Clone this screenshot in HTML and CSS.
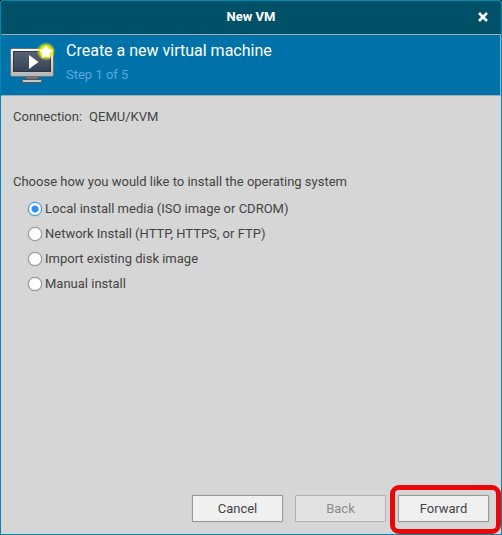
FILE: index.html
```html
<!DOCTYPE html>
<html lang="en">
<head>
<meta charset="utf-8">
<title>New VM</title>
<link rel="stylesheet" href="styles.css">
</head>
<body>
<main class="window">
  <header class="titlebar">
    <h1 class="title">New VM</h1>
    <button class="close" type="button" aria-label="Close">
      <svg width="10" height="10" viewBox="0 0 10 10"><path d="M1 1L9 9M9 1L1 9" stroke="#fff" stroke-width="2.600"/></svg>
    </button>
  </header>
  <section class="banner">
    <svg class="logo" width="46" height="44" viewBox="0 0 46 44" aria-hidden="true">
      <defs>
        <linearGradient id="frame" x1="0" y1="0" x2="0" y2="1"><stop offset="0" stop-color="#fafafa"/><stop offset="1" stop-color="#b4b4b4"/></linearGradient>
        <linearGradient id="screen" x1="0" y1="0" x2="0" y2="1"><stop offset="0" stop-color="#566273"/><stop offset="1" stop-color="#344255"/></linearGradient>
        <radialGradient id="glow"><stop offset="0" stop-color="#ffff60"/><stop offset=".6" stop-color="#e6eb12"/><stop offset="1" stop-color="#dfe800" stop-opacity="0"/></radialGradient>
      </defs>
      <path d="M16 35h12v4H16z" fill="#737373"/>
      <rect x="12.500" y="38.500" width="19" height="3" rx="1" fill="#c8c8c8" stroke="#555"/>
      <rect x=".5" y="7.500" width="43" height="28" rx="1.500" fill="url(#frame)" stroke="#68707a"/>
      <rect x="3.500" y="10.500" width="37" height="20" fill="url(#screen)" stroke="#2c3747"/>
      <path d="M19 14v14l9.500-7z" fill="#fff"/>
      <circle cx="36" cy="10.500" r="9.500" fill="url(#glow)"/>
      <path d="M36 5l1.900 3.700 4.300.6-3.200 3 .8 4.200L36 14.600l-3.800 1.900.8-4.200-3.200-3 4.300-.6z" fill="#fff" stroke="#fff" stroke-linejoin="round"/>
    </svg>
    <div>
      <h2 class="heading">Create a new virtual machine</h2>
      <p class="step">Step 1 of 5</p>
    </div>
  </section>
  <form class="content">
    <p class="connection"><span>Connection:</span><span>QEMU/KVM</span></p>
    <fieldset class="choices">
      <legend>Choose how you would like to install the operating system</legend>
      <label class="choice"><input type="radio" name="method" checked>Local install media (ISO image or CDROM)</label>
      <label class="choice"><input type="radio" name="method">Network Install (HTTP, HTTPS, or FTP)</label>
      <label class="choice"><input type="radio" name="method">Import existing disk image</label>
      <label class="choice"><input type="radio" name="method">Manual install</label>
    </fieldset>
    <div class="actions">
      <button class="btn" type="button">Cancel</button>
      <button class="btn" type="button" disabled>Back</button>
      <button class="btn marked" type="button">Forward</button>
    </div>
  </form>
</main>
</body>
</html>
```
FILE: styles.css
```css
* { box-sizing: border-box; }

body {
  margin: 0;
  background: #00151c;
  color: #444;
  font: 13px/20px Roboto, sans-serif;
}

h1, h2, p { margin: 0; font-weight: 400; }

.window {
  display: flex;
  flex-direction: column;
  min-height: 100vh;
  border: 1px solid #008ab3;
  border-radius: 3px 3px 0 0;
  background: #d6d6d6;
}

.titlebar {
  display: grid;
  grid-template-columns: 36px 1fr 36px;
  align-items: center;
  height: 33px;
  padding-bottom: 2px;
  border-radius: 2px 2px 0 0;
  background: #005068;
  color: #fff;
}

.title {
  grid-column: 2;
  font-size: 13px;
  font-weight: 700;
  line-height: 20px;
  text-align: center;
}

.close {
  display: flex;
  justify-content: center;
  padding: 0;
  border: 0;
  background: none;
}

.banner {
  display: flex;
  gap: 10px;
  height: 62px;
  padding: 6px 8px;
  border: 1px solid #a3abb5;
  border-left-color: #0072aa;
  background: #0072aa;
}

.heading {
  color: #fff;
  font-size: 16px;
  line-height: 20px;
}

.step {
  margin-top: 4px;
  color: #59a9dc;
}

.content {
  display: flex;
  flex: 1;
  flex-direction: column;
  padding: 11px 12px 12px;
}

.connection { display: flex; gap: 7px; }

.choices {
  margin: 45px 0 0;
  padding: 0;
  border: 0;
}

.choices legend { padding: 0; margin-bottom: 4px; }

.choice {
  display: flex;
  align-items: center;
  gap: 3px;
  height: 25px;
  padding-left: 15px;
}

.choice input {
  appearance: none;
  width: 14px;
  height: 14px;
  margin: 0;
  border: 1px solid #999;
  border-radius: 50%;
  background: #fff;
  box-shadow: 0 0 1px #888;
}

.choice input:checked {
  border-color: #3392f5;
  background: radial-gradient(circle, #2f91f7 3px, #fff 4px);
  box-shadow: 0 0 1px #3392f5;
}

.actions {
  display: flex;
  justify-content: flex-end;
  gap: 12px;
  margin-top: auto;
}

.btn {
  position: relative;
  width: 91px;
  height: 27px;
  padding: 0;
  border: 1px solid #999;
  border-radius: 1px;
  background: #f0f0f0;
  box-shadow: 0 0 1px #888;
  color: #444;
  font: inherit;
}

.btn:disabled {
  border-color: #b1b1b1;
  background: #e2e2e2;
  box-shadow: none;
  color: #8b8b8b;
}

.marked::after {
  content: "";
  position: absolute;
  inset: -11px -13px -13px -9px;
  border: 5px solid #ea0707;
  border-radius: 9px;
}
```
